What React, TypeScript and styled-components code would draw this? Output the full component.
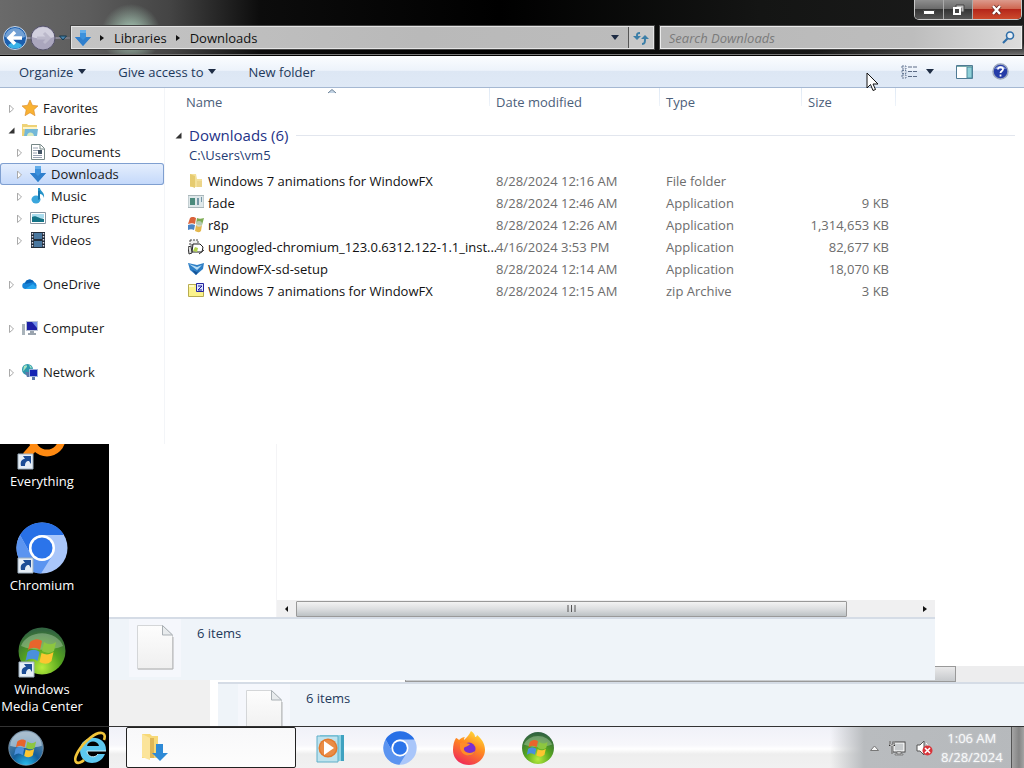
import React from "react";
import styled, { createGlobalStyle } from "styled-components";

const GlobalStyle = createGlobalStyle`
  *, *::before, *::after { box-sizing: border-box; }
  body {
    margin: 0;
    background: #000;
    color: #1a1a1a;
    font: 13px/22px "Open Sans", "Noto Sans", sans-serif;
  }
  button, input { font: inherit; color: inherit; }
  button { border: 0; padding: 0; background: none; }
  a { color: inherit; text-decoration: none; }
  ul { list-style: none; margin: 0; padding: 0; }
  svg { display: block; flex: none; }
`;

/* ---------- layout ---------- */

const Screen = styled.div`
  position: relative;
  display: flex;
  flex-direction: column;
  min-height: 100vh;
  overflow: hidden;
`;

const Explorer = styled.section`
  background: #fff;
`;

const Glass = styled.header`
  display: flex;
  flex-direction: column;
  gap: 5px;
  height: 56px;
  border-bottom: 1px solid #000;
  box-shadow: inset 0 -1px #777;
  background:
    radial-gradient(circle at 131px 34px, rgba(170, 205, 185, 0.85) 6px, rgba(130, 170, 150, 0) 30px),
    radial-gradient(ellipse at 42px 38px, rgba(190, 185, 215, 0.7) 8px, rgba(120, 120, 130, 0) 40px),
    radial-gradient(ellipse at 100% 100%, rgba(120, 120, 120, 0.9), rgba(40, 40, 40, 0) 220px),
    linear-gradient(90deg, #6a6a6a 0, #5c5c5c 90px, #444 170px, #0c0c0c 260px, #000 500px, #141514 760px, #1c1c1c 100%);
`;

const Caption = styled.div`
  display: flex;
  justify-content: flex-end;
  height: 21px;
  padding-right: 2px;
`;

const CaptionGroup = styled.div`
  display: flex;
  height: 20px;
  border: 1px solid #c9c9c9;
  border-top: 0;
  border-radius: 0 0 5px 5px;
  overflow: hidden;
`;

const CaptionButton = styled.button<{ $close?: boolean }>`
  display: grid;
  place-items: center;
  width: ${(p) => (p.$close ? 48 : 29)}px;
  border-right: ${(p) => (p.$close ? "0" : "1px solid #aaa")};
  background: ${(p) =>
    p.$close
      ? "linear-gradient(#dc9a8c 0, #cf6852 45%, #b5271a 50%, #cc4a2c 100%)"
      : "linear-gradient(#8e8e8e 0, #6c6c6c 45%, #343434 50%, #555 100%)"};
`;

const NavRow = styled.div`
  display: flex;
  align-items: center;
  height: 23px;
  padding: 0 2px 0 3px;
`;

const NavButton = styled.button`
  margin-right: 3px;
`;

const AddressBar = styled.nav`
  display: flex;
  flex: 579 1 0;
  align-items: center;
  gap: 9px;
  height: 23px;
  padding-left: 3px;
  margin: 0 6px 0 1px;
  border: 1px solid #e4e4e4;
  outline: 1px solid #444;
  color: #111;
  background: linear-gradient(90deg, #c4c4c4, #b9b9b9 60%, #bcbcbc);
`;

const AddressTools = styled.div`
  display: flex;
  align-items: center;
  gap: 9px;
  margin-left: auto;
`;

const Refresh = styled.button`
  display: grid;
  place-items: center;
  width: 25px;
  height: 21px;
  border-left: 1px solid #555;
  background: #c8c8c8;
`;

const SearchBox = styled.label`
  display: flex;
  flex: 347 1 0;
  align-items: center;
  height: 23px;
  padding: 0 6px 0 8px;
  border: 1px solid #ececec;
  outline: 1px solid #444;
  background: linear-gradient(90deg, #b8b8b8, #bdbdbd 70%, #dcdcdc);
`;

const SearchInput = styled.input`
  flex: 1;
  min-width: 0;
  padding: 0;
  border: 0;
  outline: 0;
  background: none;
  &::placeholder { color: #7b7b7b; font-style: italic; opacity: 1; }
`;

const CommandBar = styled.div`
  display: flex;
  align-items: center;
  gap: 32px;
  height: 32px;
  padding: 0 15px 0 19px;
  color: #1e395b;
  border-bottom: 1px solid #a5b8d2;
  background: linear-gradient(#fbfdff 0, #edf3fb 46%, #dde7f4 50%, #dfe9f6 100%);
`;

const Command = styled.button`
  display: flex;
  align-items: center;
  gap: 5px;
`;

const CommandTools = styled.div`
  display: flex;
  align-items: center;
  gap: 19px;
  margin-left: auto;
`;

const ViewCommand = styled(Command)`
  gap: 9px;
  margin-right: 3px;
`;

const Content = styled.div`
  display: flex;
`;

/* ---------- navigation tree ---------- */

const Sidebar = styled.nav`
  flex: none;
  width: 165px;
  padding: 9px 0 61px;
  border-right: 1px solid #f3f5f8;
`;

const TreeGroup = styled.ul`
  & + & { margin-top: 22px; }
`;

const TreeRow = styled.li<{ $nested?: boolean; $selected?: boolean }>`
  display: flex;
  align-items: center;
  gap: 7px;
  height: 22px;
  padding-left: ${(p) => (p.$nested ? 16 : 8)}px;
  border-radius: 3px;
  background: ${(p) => (p.$selected ? "linear-gradient(#e6effd, #c3d8fa)" : "none")};
  box-shadow: ${(p) => (p.$selected ? "inset 0 0 0 1px #7f9fd0" : "none")};
`;

const TreeLink = styled.a`
  display: flex;
  align-items: center;
  gap: 5px;
`;

/* ---------- file list ---------- */

const FilePane = styled.main`
  flex: 1;
  min-width: 0;
  padding-right: 9px;
`;

const FileTable = styled.table`
  width: 100%;
  table-layout: fixed;
  border-collapse: collapse;
  color: #6d6d6d;
`;

const ColumnHead = styled.th<{ $width?: number; $first?: boolean }>`
  position: relative;
  width: ${(p) => (p.$width ? `${p.$width}px` : "auto")};
  height: 28px;
  padding: 0 6px 0 ${(p) => (p.$first ? 21 : 6)}px;
  font-weight: 400;
  text-align: left;
  color: #4c607a;
  background: ${(p) => (p.$width ? "linear-gradient(#dfe9f5, #eef3f9) right top / 1px 18px no-repeat" : "none")};
`;

const SortMark = styled.svg`
  position: absolute;
  top: 1px;
  left: 50%;
`;

const GroupCell = styled.th`
  height: 54px;
  padding: 9px 0 0 10px;
  font-weight: 400;
  text-align: left;
  vertical-align: top;
  color: #1e3287;
`;

const GroupTitle = styled.div`
  display: flex;
  align-items: center;
  gap: 7px;
  font-size: 15px;
  line-height: 20px;
  &::after { content: ""; flex: 1; height: 1px; background: #e2e6ee; }
`;

const GroupPath = styled.div`
  padding-left: 14px;
  line-height: 20px;
  color: #1f3c74;
`;

const Cell = styled.td<{ $right?: boolean }>`
  height: 22px;
  padding: 0 ${(p) => (p.$right ? 7 : 6)}px 0 6px;
  text-align: ${(p) => (p.$right ? "right" : "left")};
  white-space: nowrap;
`;

const FileName = styled.a`
  display: flex;
  align-items: center;
  gap: 4px;
  padding-left: 17px;
  color: #111;
`;

/* ---------- desktop area below the window ---------- */

const Desktop = styled.div`
  display: flex;
  flex: 1;
`;

const IconColumn = styled.ul`
  display: flex;
  flex: none;
  flex-direction: column;
  gap: 32px;
  width: 109px;
  padding: 0 25px 11px 0;
  background: #000;
`;

const Shortcut = styled.a`
  display: flex;
  flex-direction: column;
  align-items: center;
  gap: 3px;
  line-height: 17px;
  text-align: center;
  color: #fff;
`;

const Backdrop = styled.div`
  position: relative;
  flex: 1;
  background: #fff;
`;

const FrontGhost = styled.div`
  position: absolute;
  inset: 0 89px 46px 0;
  display: flex;
  flex-direction: column;
`;

const GhostPanes = styled.div`
  display: flex;
  flex: 1;
`;

const GhostTree = styled.div`
  width: 168px;
  border-right: 1px solid #f4f4f6;
  background: #fff;
`;

const GhostList = styled.div`
  display: flex;
  flex: 1;
  align-items: flex-end;
  background: #fff;
`;

const ScrollBar = styled.div`
  display: flex;
  flex: 1;
  align-items: center;
  height: 17px;
  background: #f0f0f1;
`;

const ScrollArrow = styled.button`
  display: grid;
  place-items: center;
  width: 19px;
  height: 17px;
`;

const ScrollThumb = styled.div`
  display: grid;
  place-items: center;
  width: 551px;
  height: 16px;
  border: 1px solid #999;
  border-radius: 1px;
  background: linear-gradient(#f3f3f3, #dcdee0 50%, #bcc1c4);
`;

const Spacer = styled.span`
  flex: 1;
`;

const Details = styled.div<{ $back?: boolean }>`
  display: flex;
  align-items: flex-start;
  gap: 16px;
  height: ${(p) => (p.$back ? 44 : 63)}px;
  padding: 0 20px;
  overflow: hidden;
  color: #1e395b;
  border-top: 2px solid #d5dce6;
  background: #eff4f9;
`;

const FileThumb = styled.div`
  padding: 5px 3px;
  background: rgba(246, 248, 253, 0.8);
`;

const ItemCount = styled.span`
  padding-top: 3px;
`;

const BackGhost = styled.div`
  position: absolute;
  right: 0;
  bottom: 0;
  left: 109px;
`;

const GreyCorner = styled.div`
  position: absolute;
  bottom: 0;
  left: 0;
  width: 101px;
  height: 46px;
  background: #f0f0f0;
`;

const BackScroll = styled.div`
  display: flex;
  height: 16px;
  padding-right: 68px;
  background: #ededee;
`;

const BackTrack = styled.div`
  width: 187px;
  background: #fff;
`;

const BackThumb = styled.div`
  flex: 1;
  border: 1px solid #999;
  background: linear-gradient(#e9e9ea, #c6c9cc);
`;

const Pointer = styled.svg`
  position: absolute;
  top: 72px;
  right: 145px;
`;

/* ---------- taskbar ---------- */

const Taskbar = styled.footer`
  display: flex;
  height: 42px;
  border-top: 1px solid #333;
  background: linear-gradient(#f0f1f8 0, #f7f7fb 18px, #fff 22px, #eee 27px, #f1f1f1 100%);
`;

const TaskStart = styled.div`
  display: flex;
  flex: none;
  align-items: center;
  gap: 29px;
  width: 109px;
  padding-left: 8px;
  overflow: hidden;
  background: #000;
`;

const TaskActive = styled.button`
  flex: none;
  width: 170px;
  padding-left: 13px;
  margin-left: 17px;
  border: 1px solid #222;
  border-radius: 2px;
  background: linear-gradient(#f8f8f9, #fdfdfd);
`;

const TaskButton = styled.button`
  display: grid;
  flex: none;
  place-items: center;
  width: 69px;
`;

const Tray = styled.div`
  display: flex;
  align-items: center;
  gap: 8px;
  width: 204px;
  padding-left: 50px;
  margin-left: auto;
  background: linear-gradient(90deg, rgba(180, 184, 188, 0) 10px, #b9bcbf 44px, #b6b9bc);
`;

const TrayIcons = styled.div`
  display: flex;
  align-items: center;
  gap: 10px;
`;

const Clock = styled.time`
  flex: 1;
  line-height: 19px;
  text-align: center;
  white-space: nowrap;
  color: #f8f9fa;
  text-shadow: 0 0 2px #e4e6e8;
`;

const ShowDesktop = styled.button`
  flex: none;
  align-self: stretch;
  width: 15px;
  border-left: 1px solid #555;
  background: linear-gradient(90deg, #a4a4a4, #858585 50%, #b0b0b0);
`;

/* ---------- drawings ---------- */

const DownArrow = ({ size = 16 }: { size?: number }) => (
  <svg width={size} height={size} viewBox="0 0 16 16">
    <path d="M5 0h6v7h5l-8 9-8-9h5z" fill="#3d91dc" />
    <path d="M5 0h6v3H5z" fill="#65aeea" />
    <path d="M0 7h5l3 3 3-3h5l-8 9z" fill="#2f7fcd" />
  </svg>
);

const Caret = () => (
  <svg width="8" height="5" viewBox="0 0 8 5"><path d="M0 0h8L4 5z" fill="#1e2c44" /></svg>
);

const Chevron = ({ flip = false }: { flip?: boolean }) => (
  <svg width="5" height="8" viewBox="0 0 5 8"><path d={flip ? "M4 1v6L1 4z" : "M0 1v6l4-3z"} fill="#111" /></svg>
);

const Twisty = ({ open = false }: { open?: boolean }) => (
  <svg width="7" height="9" viewBox="0 0 7 9">
    {open ? <path d="M6.500 1.500v6H.5z" fill="#333" /> : <path d="M1.500 1l4 4-4 3.500z" fill="#fff" stroke="#aaa" />}
  </svg>
);

const WinFlag = () => (
  <g>
    <path d="M13 16c5-4 9-3 12-1l-2 9c-4-3-8-3-12 0z" fill="#e8642c" />
    <path d="M27 16c4 3 8 3 12 0l-2 9c-4 3-8 2-12 0z" fill="#8dc63f" />
    <path d="M10.500 26c4-3 8-3 12 0l-2 9c-4-3-8-3-12 0z" fill="#4a90dc" />
    <path d="M24.500 27c4 2 8 2 12-1l-2 9c-4 4-8 3-12 1z" fill="#fcc630" />
  </g>
);

const StartOrb = () => (
  <svg width="36" height="36" viewBox="0 0 50 50">
    <defs>
      <radialGradient id="orb" cx="50%" cy="100%" r="90%">
        <stop offset="0" stopColor="#28c0f0" /><stop offset=".45" stopColor="#145f9c" /><stop offset="1" stopColor="#6b8ba5" />
      </radialGradient>
    </defs>
    <circle cx="25" cy="25" r="24" fill="url(#orb)" stroke="#8aa0b4" />
    <path d="M3 22a22 20 0 0 1 44 0c-12 4-32 4-44 0z" fill="#dbe8f0" opacity=".55" />
    <WinFlag />
  </svg>
);

const MediaCenterArt = () => (
  <>
    <defs>
      <radialGradient id="mce" cx="50%" cy="85%" r="80%">
        <stop offset="0" stopColor="#b8ec3c" /><stop offset=".5" stopColor="#55a51e" /><stop offset="1" stopColor="#326440" />
      </radialGradient>
    </defs>
    <circle cx="25" cy="25" r="23.500" fill="url(#mce)" />
    <path d="M4 20a22 18 0 0 1 42 0c-12 5-30 5-42 0z" fill="#d5e9d0" opacity=".35" />
    <WinFlag />
  </>
);

const ChromiumArt = () => (
  <>
    <circle cx="26" cy="26" r="25.500" fill="#a9c6fa" />
    <path d="M4 13A25.500 25.500 0 0 1 48 13H26A13 13 0 0 0 14 31z" fill="#2870e6" />
    <path d="M4 13A25.500 25.500 0 0 0 25 51.500L36 34a13 13 0 0 1-22-3z" fill="#5b94f0" />
    <circle cx="26" cy="26" r="13" fill="#fff" />
    <circle cx="26" cy="26" r="10.500" fill="#2b74ea" />
  </>
);

const ShortcutMark = () => (
  <g>
    <path d="M2 36h15v15H2z" fill="#e6eef6" stroke="#9eb0c0" />
    <path d="M5 48c-1-5 1-7 4-7l-2-3h8v8l-2-3c-3 0-4 2-4 5z" fill="#1d4d96" />
  </g>
);

const Paper = () => (
  <svg width="46" height="48" viewBox="0 0 46 48">
    <defs>
      <linearGradient id="paper" x1="0" y1="0" x2="0" y2="1">
        <stop offset="0" stopColor="#fdfdfd" /><stop offset="1" stopColor="#efefef" />
      </linearGradient>
    </defs>
    <path d="M5.500 1.500h25l10 9.500v34h-35z" fill="url(#paper)" stroke="#d4d6d8" />
    <path d="M30.500 1.500v9.500h10z" fill="#e8ebed" stroke="#a9afb4" />
    <path d="M6 45h35V13" fill="none" stroke="#b4b4b4" />
  </svg>
);

const treeIcons: Record<string, React.ReactNode> = {
  Favorites: <path d="M8 0l2.400 5.300 5.600.6-4.200 3.900 1.200 5.900L8 12.700l-5 3 1.200-5.900L0 5.900l5.600-.6z" fill="#f9b233" stroke="#d8882a" strokeWidth=".6" />,
  Libraries: (
    <>
      <path d="M0 2h5l1 1h9v11H0z" fill="#eed276" /><path d="M1 5h14v2H1z" fill="#fff5c8" />
      <path d="M3 7h13l-1 7H2z" fill="#74b8d8" /><path d="M5 14c0-4 6-5 7 0z" fill="#d9ebbf" />
    </>
  ),
  Documents: (
    <>
      <path d="M1.500.5h9l4 4v11h-13z" fill="#fff" stroke="#788" /><path d="M10 1v4h4" fill="none" stroke="#788" />
      <path d="M3 4h5M3 6.500h5M3 9h4M3 11.500h9M3 13.500h9" stroke="#7c8aa0" strokeWidth=".8" /><path d="M8 6h4v4H8z" fill="#456" />
    </>
  ),
  Music: (
    <>
      <path d="M8 0h2c0 3 5 4 4 10-1-3-2-4-4-4v5H8z" fill="#2593c9" />
      <ellipse cx="6" cy="11.500" rx="4.500" ry="4" fill="#3aa6dc" /><path d="M8 3v9l2-1V3z" fill="#1878b0" />
    </>
  ),
  Pictures: (
    <>
      <path d="M.5 2.500h15v11H.5z" fill="#fff" stroke="#8a98a4" /><path d="M2 4h12v4H2z" fill="#a9dcee" />
      <path d="M2 7c4-2 5 1 12 2v3H2z" fill="#147487" />
    </>
  ),
  Videos: (
    <>
      <path d="M1 0h14v16H1z" fill="#222c38" /><path d="M4 1h8v6H4zM4 9h8v6H4z" fill="#49779f" />
      <path d="M2.500 1v14M13.500 1v14" stroke="#dde" strokeWidth="1.400" strokeDasharray="1.500 1.500" />
    </>
  ),
  OneDrive: <><path d="M3 13a3.300 3.300 0 0 1 0-6.500A5 5 0 0 1 12 6a4 4 0 0 1 1 7z" fill="#1684d8" /><path d="M3 13l8-5 4 4-2 1z" fill="#29a7ef" /><path d="M4 5a5 5 0 0 1 8 1L3 8z" fill="#0a62b5" /></>,
  Computer: (
    <>
      <path d="M0 4h3v11H0z" fill="#a9b3ba" /><path d="M4 1h12v10H4z" fill="#b8c2d4" /><path d="M5 2h10v8H5z" fill="#1c1fa6" />
      <path d="M10 2h5v6z" fill="#6f8ce8" /><path d="M8 11h4v2h2v2H6v-2h2z" fill="#9aa4ae" />
    </>
  ),
  Network: (
    <>
      <circle cx="5.500" cy="5.500" r="5.500" fill="#2d9aae" /><path d="M2 2c3-2 4 0 2 2s-2 3-3 3zM7 1c3 1 3 3 2 4z" fill="#a8e4c0" />
      <path d="M7 5h9v8H7z" fill="#9cb2dc" /><path d="M8 6h7v6H8z" fill="#1525b4" /><path d="M10 13h3v3h-3zM3 8h4v5H5z" fill="#5a78a8" />
    </>
  ),
};

const fileIcons: Record<string, React.ReactNode> = {
  folder: <><path d="M2 1h6l1 5h5v8H2z" fill="#f3e09a" /><path d="M2 1l5 2v12l-5-2z" fill="#e6cb70" /><path d="M9 8h5v6H9z" fill="#ecd58a" /></>,
  app: <><path d="M0 .5h16v12H0z" fill="#dfe8ea" stroke="#a9b6ba" /><path d="M2 3h5v7H2z" fill="#4b8a7c" /><path d="M9 3h2v7H9zM13 2h1v5h-1z" fill="#7697a7" /></>,
  windows: <><path d="M2 1c3-2 4-1 6 0L7 7C5 6 3 6 0 7z" fill="#d9623a" /><path d="M9 1c2 1 4 1 7 0l-2 7c-2 1-4 0-6-1z" fill="#7cab52" /><path d="M0 8c3-1 5-1 7 0l-1 5c-2-1-4-1-6 0z" fill="#4b84c4" /><path d="M8 8c2 1 4 1 6 0l-1 6c-2 2-4 1-6 0z" fill="#e4b84e" /><circle cx="11" cy="7" r="3" fill="#cdd8d8" opacity=".7" /></>,
  installer: <><path d="M2 1h8v5H2z" fill="#eee" stroke="#444" strokeDasharray="2 1" /><path d="M5 5h7l3 3-1 5H4z" fill="#fff" stroke="#222" /><path d="M7 8l3 1-1 4-4-1z" fill="#b3d34c" /><path d="M0 8l3-1 1 7-3 1zM11 15l5-4" fill="#ddd" stroke="#333" /></>,
  setup: <><path d="M0 2l9 2 7-2-1 6-7 6-6-5z" fill="#2e7fc6" /><path d="M1 3l8 3 5-2-5 5z" fill="#b8def6" /><path d="M4 9l5 2 3-3-4 6z" fill="#165294" /></>,
  zip: <><path d="M.5 1.500h15v12H.5z" fill="#fbf38c" stroke="#b8ac50" /><path d="M1 2h5v2H1z" fill="#fffcd0" /><path d="M8.500.5h7v8h-7z" fill="#dce4ff" stroke="#2424a0" /><path d="M10 3h4l-4 4h4" fill="none" stroke="#1a1a98" /></>,
};

const Icon16 = ({ children }: { children: React.ReactNode }) => (
  <svg width="16" height="16" viewBox="0 0 16 16">{children}</svg>
);

/* ---------- data ---------- */

type Node = { name: string; nested?: boolean; open?: boolean; selected?: boolean };

const tree: Node[][] = [
  [
    { name: "Favorites" },
    { name: "Libraries", open: true },
    { name: "Documents", nested: true },
    { name: "Downloads", nested: true, selected: true },
    { name: "Music", nested: true },
    { name: "Pictures", nested: true },
    { name: "Videos", nested: true },
  ],
  [{ name: "OneDrive" }],
  [{ name: "Computer" }],
  [{ name: "Network" }],
];

const files = [
  { icon: "folder", name: "Windows 7 animations for WindowFX", date: "8/28/2024 12:16 AM", type: "File folder", size: "" },
  { icon: "app", name: "fade", date: "8/28/2024 12:46 AM", type: "Application", size: "9 KB" },
  { icon: "windows", name: "r8p", date: "8/28/2024 12:26 AM", type: "Application", size: "1,314,653 KB" },
  { icon: "installer", name: "ungoogled-chromium_123.0.6312.122-1.1_inst...", date: "4/16/2024 3:53 PM", type: "Application", size: "82,677 KB" },
  { icon: "setup", name: "WindowFX-sd-setup", date: "8/28/2024 12:14 AM", type: "Application", size: "18,070 KB" },
  { icon: "zip", name: "Windows 7 animations for WindowFX", date: "8/28/2024 12:15 AM", type: "zip Archive", size: "3 KB" },
];

/* ---------- parts ---------- */

const TitleArea = () => (
  <Glass>
    <Caption>
      <CaptionGroup>
        <CaptionButton aria-label="Minimize">
          <svg width="12" height="12" viewBox="0 0 12 12"><path d="M.5 6.500h11v4H.5z" fill="#fff" stroke="#444" /></svg>
        </CaptionButton>
        <CaptionButton aria-label="Restore">
          <svg width="13" height="12" viewBox="0 0 13 12">
            <path d="M4 1h8v7H9V4H4z" fill="#bbb" stroke="#444" /><path d="M2 4h6v6H2z" fill="#444" stroke="#fff" strokeWidth="2" />
          </svg>
        </CaptionButton>
        <CaptionButton $close aria-label="Close">
          <svg width="12" height="12" viewBox="0 0 12 12">
            <path d="M2 2l7 8M9 2l-7 8" stroke="#6b2a22" strokeWidth="4" /><path d="M2 2l7 8M9 2l-7 8" stroke="#fff" strokeWidth="2.400" />
          </svg>
        </CaptionButton>
      </CaptionGroup>
    </Caption>
    <NavRow>
      <NavButton aria-label="Back">
        <svg width="24" height="26" viewBox="0 0 24 26">
          <circle cx="12" cy="13" r="11.500" fill="#1c5fae" stroke="#c9d6e6" />
          <path d="M2 12a10 9 0 0 1 20 0c-6 2-14 2-20 0z" fill="#8fb6e0" opacity=".75" />
          <path d="M5 21a11 11 0 0 0 14 0c-3-5-11-5-14 0z" fill="#39b3e8" />
          <path d="M12 7l-6 6 6 6M7 13h12" fill="none" stroke="#fff" strokeWidth="3.500" />
        </svg>
      </NavButton>
      <NavButton aria-label="Forward">
        <svg width="26" height="26" viewBox="0 0 26 26">
          <circle cx="13" cy="13" r="12" fill="#aaa6bd" stroke="#55536a" />
          <path d="M2 12a11 10 0 0 1 22 0c-6 2-16 2-22 0z" fill="#d2d0de" />
          <path d="M14 8l5 5-5 5M18 13H7" fill="none" stroke="#bcb9cb" strokeWidth="3" />
        </svg>
      </NavButton>
      <NavButton as={RecentButton} aria-label="Recent pages">
        <svg width="8" height="6" viewBox="0 0 8 6"><path d="M.5 1h7L4 5z" fill="#4a84ac" stroke="#12384e" /></svg>
      </NavButton>
      <AddressBar aria-label="Address">
        <DownArrow />
        <Chevron />
        <a href="#libraries">Libraries</a>
        <Chevron />
        <a href="#downloads">Downloads</a>
        <AddressTools>
          <button aria-label="Previous locations"><Caret /></button>
          <Refresh aria-label="Refresh">
            <svg width="16" height="14" viewBox="0 0 16 14">
              <path d="M7 2c-3 0-3 1-3 3M9 13c3 0 3-2 3-5" fill="none" stroke="#3c7fa8" strokeWidth="2" />
              <path d="M0 5h8L4 9zM8 8l4-4 4 4z" fill="#3c7fa8" />
            </svg>
          </Refresh>
        </AddressTools>
      </AddressBar>
      <SearchBox>
        <SearchInput type="search" placeholder="Search Downloads" aria-label="Search Downloads" />
        <svg width="13" height="13" viewBox="0 0 13 13">
          <circle cx="8" cy="4.500" r="3.500" fill="#e8eef4" stroke="#2f6ea8" strokeWidth="1.600" /><path d="M5.500 7.500L1 12" stroke="#2f6ea8" strokeWidth="2.200" />
        </svg>
      </SearchBox>
    </NavRow>
  </Glass>
);

const RecentButton = styled.button`
  width: 8px;
`;

const Commands = () => (
  <CommandBar role="toolbar">
    <Command>Organize <Caret /></Command>
    <Command>Give access to <Caret /></Command>
    <Command>New folder</Command>
    <CommandTools>
      <ViewCommand aria-label="Change your view">
        <svg width="16" height="14" viewBox="0 0 16 14">
          <path d="M1 1h4v3H1zM1 5.500h4v3H1zM1 10h4v3H1z" fill="#dde4ee" stroke="#6a7d98" strokeDasharray="2 1" />
          <path d="M7 2h9M7 6.500h9M7 11.500h9" stroke="#5b6b85" strokeDasharray="4 1" />
        </svg>
        <Caret />
      </ViewCommand>
      <Command aria-label="Preview pane">
        <svg width="17" height="14" viewBox="0 0 17 14">
          <path d="M.5.500h16v13H.5z" fill="#fff" stroke="#4f7a94" /><path d="M11 2h5v11h-5z" fill="#8fd0d8" stroke="#4f8a9c" /><path d="M1 1h15v1H1z" fill="#7aa" />
        </svg>
      </Command>
      <Command aria-label="Help">
        <svg width="17" height="17" viewBox="0 0 17 17">
          <circle cx="8.500" cy="8.500" r="7.500" fill="#253ca8" stroke="#9aa6bc" strokeWidth="1.500" /><path d="M3 6a6 5 0 0 1 11 0z" fill="#7f92d8" />
          <path d="M6 6.500c0-3.500 5.500-3 5 0-.2 1.500-2.500 1.500-2.500 3.500M8.500 11.500v2" fill="none" stroke="#fff" strokeWidth="1.800" />
        </svg>
      </Command>
    </CommandTools>
  </CommandBar>
);

const Tree = () => (
  <Sidebar aria-label="Folders">
    {tree.map((group) => (
      <TreeGroup key={group[0].name}>
        {group.map((n) => (
          <TreeRow key={n.name} $nested={n.nested} $selected={n.selected}>
            <button aria-label={`Expand ${n.name}`}><Twisty open={n.open} /></button>
            <TreeLink href={`#${n.name}`}>
              {n.name === "Downloads" ? <DownArrow /> : <Icon16>{treeIcons[n.name]}</Icon16>}
              {n.name}
            </TreeLink>
          </TreeRow>
        ))}
      </TreeGroup>
    ))}
  </Sidebar>
);

const Files = () => (
  <FilePane>
    <FileTable>
      <thead>
        <tr>
          <ColumnHead $width={325} $first>
            Name
            <SortMark width="8" height="5" viewBox="0 0 8 5"><path d="M0 4l4-3.500L8 4" fill="#c4d4e4" stroke="#6d8296" /></SortMark>
          </ColumnHead>
          <ColumnHead $width={170}>Date modified</ColumnHead>
          <ColumnHead $width={142}>Type</ColumnHead>
          <ColumnHead $width={94}>Size</ColumnHead>
          <ColumnHead as="td" />
        </tr>
      </thead>
      <tbody>
        <tr>
          <GroupCell colSpan={5} scope="rowgroup">
            <GroupTitle><Twisty open />Downloads (6)</GroupTitle>
            <GroupPath>C:\Users\vm5</GroupPath>
          </GroupCell>
        </tr>
        {files.map((f) => (
          <tr key={f.icon}>
            <Cell><FileName href="#file"><Icon16>{fileIcons[f.icon]}</Icon16>{f.name}</FileName></Cell>
            <Cell>{f.date}</Cell>
            <Cell>{f.type}</Cell>
            <Cell $right>{f.size}</Cell>
            <td />
          </tr>
        ))}
      </tbody>
    </FileTable>
  </FilePane>
);

const DesktopIcons = () => (
  <IconColumn>
    <li>
      <Shortcut href="#everything">
        <svg width="52" height="26" viewBox="0 26 52 26">
          <circle cx="31" cy="20" r="15" fill="none" stroke="#ff8a12" strokeWidth="7" /><path d="M18 29l-8 9" stroke="#ff8a12" strokeWidth="8" />
          <ShortcutMark />
        </svg>
        Everything
      </Shortcut>
    </li>
    <li>
      <Shortcut href="#chromium">
        <svg width="52" height="52" viewBox="0 0 52 52"><ChromiumArt /><ShortcutMark /></svg>
        Chromium
      </Shortcut>
    </li>
    <li>
      <Shortcut href="#mediacenter">
        <svg width="52" height="52" viewBox="-1 0 52 52"><MediaCenterArt /><ShortcutMark /></svg>
        <span>Windows<br />Media Center</span>
      </Shortcut>
    </li>
  </IconColumn>
);

const GhostWindows = () => (
  <Backdrop>
    <GreyCorner />
    <BackGhost>
      <BackScroll><BackTrack /><BackThumb /></BackScroll>
      <Details $back>
        <FileThumb><Paper /></FileThumb>
        <ItemCount>6 items</ItemCount>
      </Details>
    </BackGhost>
    <FrontGhost>
      <GhostPanes>
        <GhostTree />
        <GhostList>
          <ScrollBar>
            <ScrollArrow aria-label="Scroll left"><Chevron flip /></ScrollArrow>
            <ScrollThumb>
              <svg width="9" height="7" viewBox="0 0 9 7"><path d="M1 0v7M4.500 0v7M8 0v7" stroke="#555" /></svg>
            </ScrollThumb>
            <Spacer />
            <ScrollArrow aria-label="Scroll right"><Chevron /></ScrollArrow>
          </ScrollBar>
        </GhostList>
      </GhostPanes>
      <Details>
        <FileThumb><Paper /></FileThumb>
        <ItemCount>6 items</ItemCount>
      </Details>
    </FrontGhost>
  </Backdrop>
);

const Tasks = () => (
  <Taskbar>
    <TaskStart>
      <button aria-label="Start"><StartOrb /></button>
      <button aria-label="Internet Explorer">
        <svg width="35" height="36" viewBox="0 0 35 36">
          <path d="M33 21H14c0 6 8 8 11 3h7C27 37 7 36 7 20 7 4 34 3 33 21zM14 16h12c-1-6-11-6-12 0z" fill="#5cc8f0" />
          <path d="M33 21H14c0 6 8 8 11 3" fill="none" stroke="#c6f0fc" strokeWidth="1" />
          <path d="M31 10C34 2 27 0 17 8 7 16 0 28 3 32c2 2 6 0 8-2" fill="none" stroke="#f2c53a" strokeWidth="2.600" />
        </svg>
      </button>
    </TaskStart>
    <TaskActive aria-label="Downloads">
      <svg width="28" height="29" viewBox="0 0 28 29">
        <path d="M2 1h8l2 2h6v22H2z" fill="#f7d978" /><path d="M2 1l8 4v22l-8-3z" fill="#fbe49a" /><path d="M10 5h4v20h-4z" fill="#dfb757" />
        <path d="M16 11h7v9h5l-8 8-8-8h4z" fill="#2e8ad6" />
      </svg>
    </TaskActive>
    <TaskButton aria-label="Windows Media Player">
      <svg width="30" height="30" viewBox="0 0 30 30">
        <path d="M8 2h20v26H8z" fill="#3fa2c0" /><path d="M4 2h21v26H4z" fill="#8fd2e4" /><path d="M1 3h21v26H1z" fill="#bfe3ee" stroke="#5faec8" />
        <circle cx="12" cy="15" r="9.500" fill="#e4792c" /><circle cx="12" cy="15" r="8" fill="#f0a060" opacity=".5" /><path d="M8 8l10 7-10 7z" fill="#fff" />
      </svg>
    </TaskButton>
    <TaskButton aria-label="Chromium">
      <svg width="34" height="34" viewBox="0 0 52 52"><ChromiumArt /></svg>
    </TaskButton>
    <TaskButton aria-label="Firefox">
      <svg width="34" height="34" viewBox="0 0 34 34">
        <defs>
          <linearGradient id="fox" x1=".8" y1="0" x2=".3" y2="1">
            <stop offset="0" stopColor="#ffe43c" /><stop offset=".45" stopColor="#ff8a20" /><stop offset="1" stopColor="#f02858" />
          </linearGradient>
        </defs>
        <path d="M4 7c1 0 2 1 3 2 2-2 4-3 6-3-1 1-1 2-1 3 3-3 5-5 7-9 3 2 4 4 4 6 1 0 2-1 2-2 5 4 8 9 8 15 0 8-7 15-16 15S1 28 1 19c0-5 1-9 3-12z" fill="url(#fox)" />
        <circle cx="17" cy="18" r="6.500" fill="#7a2fd0" /><path d="M8 12c4-1 6 0 10 1-2 3-5 2-6 4-1 4 6 7 11 3-2 7-13 6-15-3z" fill="#ff8c28" />
      </svg>
    </TaskButton>
    <TaskButton aria-label="Windows Media Center">
      <svg width="34" height="34" viewBox="0 0 50 50"><MediaCenterArt /></svg>
    </TaskButton>
    <Tray>
      <TrayIcons>
        <svg width="9" height="6" viewBox="0 0 9 6"><path d="M.5 5.500L4.500 1l4 4.500z" fill="#f6f6f6" stroke="#777" /></svg>
        <svg width="17" height="16" viewBox="0 0 17 16">
          <path d="M5 3h10v8H5z" fill="#c7cacc" stroke="#444" strokeWidth="3" /><path d="M5 3h10v8H5z" fill="#c7cacc" stroke="#fff" strokeWidth="1.200" />
          <path d="M8 12h4v2H8zM6 14h8v1H6z" fill="#fff" stroke="#555" strokeWidth=".6" />
          <path d="M1 1v4h4V1M3 5v9" fill="none" stroke="#333" strokeWidth="2" /><path d="M1 1v4h4V1M3 5v9" fill="none" stroke="#fff" strokeWidth=".9" />
        </svg>
        <svg width="17" height="16" viewBox="0 0 17 16">
          <path d="M1 5h3l4-4v14l-4-4H1z" fill="#fff" stroke="#555" /><path d="M10 3c2 2 2 3 2 5" fill="none" stroke="#fff" />
          <circle cx="11.500" cy="10.500" r="5" fill="#d8343a" /><path d="M9 8l5 5M14 8l-5 5" stroke="#fff" strokeWidth="1.600" />
        </svg>
      </TrayIcons>
      <Clock>1:06 AM<br />8/28/2024</Clock>
      <ShowDesktop aria-label="Show desktop" />
    </Tray>
  </Taskbar>
);

export default function App() {
  return (
    <Screen>
      <GlobalStyle />
      <Explorer>
        <TitleArea />
        <Commands />
        <Content>
          <Tree />
          <Files />
        </Content>
      </Explorer>
      <Desktop>
        <DesktopIcons />
        <GhostWindows />
      </Desktop>
      <Tasks />
      <Pointer width="13" height="20" viewBox="0 0 13 20">
        <path d="M1 1v15l3.500-3.500L7 18.500l2.500-1L7 12h5z" fill="#fff" stroke="#111" />
      </Pointer>
    </Screen>
  );
}
